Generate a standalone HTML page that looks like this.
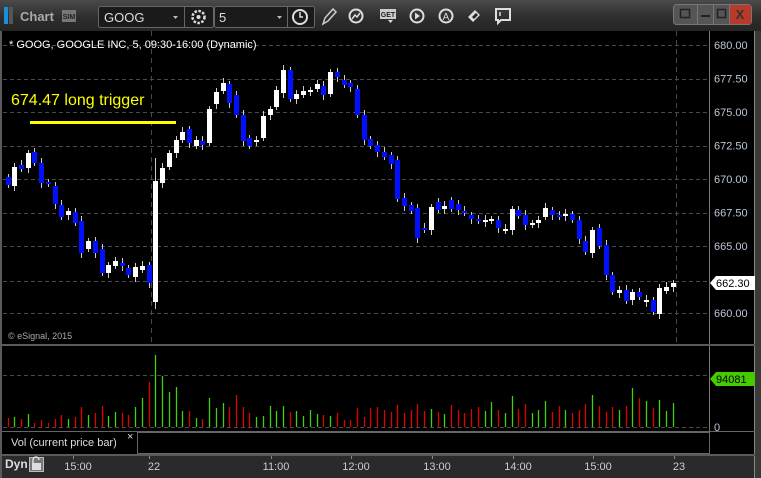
<!DOCTYPE html>
<html><head><meta charset="utf-8"><style>
body{margin:0;width:761px;height:478px;overflow:hidden;background:#2a2a2a;font-family:"Liberation Sans",sans-serif;}
#tb{position:absolute;left:0;top:0;width:761px;height:31px;background:linear-gradient(#4a4a4a,#2c2c2c 60%,#262626);}
</style></head><body>
<div id="tb"></div>
<svg id="s" width="761" height="478" style="position:absolute;left:0;top:0" font-family="Liberation Sans, sans-serif"></svg>
<script>
var C=[[177,185,0],[167,186,1],[165,169,0],[153,168,1],[152,163,0],[163,183,0],[182,184,0],[186,204,0],[205,217,0],[211,215,1],[212,223,0],[221,253,0],[241,249,1],[241,253,0],[249,273,0],[265,273,1],[261,266,1],[263,266,0],[268,275,0],[267,277,1],[266,270,1],[265,283,0],[181,302,1],[168,183,1],[153,167,1],[140,153,1],[132,140,1],[129,143,0],[140,146,1],[141,145,0],[109,143,1],[92,104,1],[83,91,1],[84,103,0],[95,115,0],[115,141,0],[138,146,0],[140,141,1],[116,138,1],[109,115,1],[90,107,1],[70,93,1],[70,99,0],[94,99,1],[91,95,1],[90,91,1],[84,89,1],[86,95,0],[72,94,1],[72,77,0],[80,85,0],[83,87,0],[89,115,0],[115,140,0],[139,146,0],[145,152,0],[152,157,0],[155,164,0],[160,199,0],[198,206,0],[205,211,0],[208,238,0],[228,230,0],[207,230,1],[202,210,0],[206,209,1],[200,209,0],[204,210,0],[211,213,0],[215,219,0],[219,221,0],[220,222,1],[219,221,1],[220,228,0],[229,231,1],[209,230,1],[210,216,0],[215,225,0],[223,225,1],[220,223,1],[208,217,1],[210,215,0],[215,217,0],[214,216,1],[214,220,0],[220,239,0],[241,252,0],[230,253,1],[228,246,0],[245,275,0],[275,292,0],[290,293,1],[290,301,0],[292,300,1],[292,297,0],[300,302,1],[300,312,0],[288,314,1],[287,291,1],[283,287,1]];
var V=[418,417,419,414,423,420,423,419,415,419,417,407,415,413,406,416,412,413,415,407,398,382,355,376,392,387,411,411,418,419,398,408,403,407,395,407,413,417,416,406,411,406,412,411,416,410,414,415,416,413,420,420,408,417,408,407,410,412,405,413,410,404,411,409,412,414,405,410,413,409,407,411,402,410,413,396,409,404,413,410,401,412,406,410,413,410,404,395,406,412,407,410,406,388,398,401,408,400,411,403,378];
var h='';
function r(x,y,w,hh,c){h+='<rect x="'+x+'" y="'+y+'" width="'+w+'" height="'+hh+'" fill="'+c+'"/>';}
function l(x1,y1,x2,y2,c,w,d){h+='<line x1="'+x1+'" y1="'+y1+'" x2="'+x2+'" y2="'+y2+'" stroke="'+c+'" stroke-width="'+(w||1)+'"'+(d?' stroke-dasharray="'+d+'"':'')+'/>';}
function t(x,y,s,c,fs,a,fw){h+='<text x="'+x+'" y="'+y+'" fill="'+c+'" font-size="'+fs+'"'+(a?' text-anchor="'+a+'"':'')+(fw?' font-weight="bold"':'')+'>'+s+'</text>';}
r(2,31,753,424,'#000');
r(0,31,2,447,'#5a5a5a');r(755,31,6,447,'#3a3a3a');r(754,31,1,447,'#888');
var prices=['680.00','677.50','675.00','672.50','670.00','667.50','665.00','662.50','660.00'];
for(var i=0;i<9;i++){var y=45+i*33.5;if(i==7)y=280.5;l(3,Math.round(y)+.5,709,Math.round(y)+.5,'#4a4a4a',1,'4,3');}
for(var i=0;i<9;i++){var y=45+i*33.5;if(i==7)continue;t(714,y+4,prices[i],'#b8c8d8',11);}
l(151.5,31,151.5,344,'#4a4a4a',1,'5,4');l(676.5,31,676.5,345,'#4a4a4a',1,'5,4');
l(709.5,31,709.5,455,'#777',1);
for(var i=0;i<C.length;i++){var x=Math.round(7.5+i*6.72),c=C[i];var col=c[2]?'#fff':'#0010ff';
var wt=c[0]-3-(i%3),wb=c[1]+3+(i%2)*2;if(i==22){wt=158;wb=309;}
l(x+.5,wt,x+.5,wb,'#ccc',1);r(x-2,c[0],5,Math.max(2,c[1]-c[0]),col);
var vc=c[2]?'#40d010':'#e00000';l(x+.5,V[i],x+.5,427,vc,1.3);}
t(11,105,'674.47 long trigger','#ffff00',16);r(30,121,146,3,'#ffff00');
t(9,48,'* GOOG, GOOGLE INC, 5, 09:30-16:00 (Dynamic)','#fff',11);
t(8,339,'© eSignal, 2015','#aaa',9);
r(2,344,753,2,'#5a5a5a');
l(3,375.5,709,375.5,'#4a4a4a',1,'4,3');l(3,427.5,709,427.5,'#4a4a4a',1,'4,3');
t(714,431,'0','#b8c8d8',11);
r(2,431,753,1,'#666');
r(137,432,572,22,'#000');h+='<rect x="137.5" y="432.5" width="572" height="21" fill="none" stroke="#666"/>';
t(11,446,'Vol (current price bar)','#ddd',11);t(127,440,'×','#ddd',11);
r(2,454,753,2,'#5a5a5a');
h+='<path d="M710 283 L716 276 H755 V290 H716Z" fill="#fff"/>';t(716,287,'662.30','#000',11);
h+='<path d="M710 379 L716 372 H755 V386 H716Z" fill="#44cc00"/>';t(716,383,'94081','#000',11);
var T=[[78,'15:00'],[154,'22'],[276,'11:00'],[356,'12:00'],[437,'13:00'],[518,'14:00'],[598,'15:00'],[679,'23']];
T.forEach(function(a){l(a[0]-4.5,456,a[0]-4.5,459,'#888');t(a[0],470,a[1],'#ccc',11,'middle');});
t(5,468,'Dyn','#ddd',12,null,1);
r(29,457,15,15,'#777');h+='<rect x="29.5" y="457.5" width="14" height="14" fill="none" stroke="#bbb"/>';
h+='<path d="M33 463 V460 a3 3 0 0 1 6 0" fill="none" stroke="#ddd" stroke-width="1.5"/>';r(32,463,9,7,'#ddd');
r(4,7,4,17,'#1a8fe0');r(9,7,4,17,'#555');
t(20,21,'Chart','#aaa',13,null,1);
r(62,10,14,12,'#777');t(69,19,'SIM','#222',7,'middle',1);
h+='<rect x="98.5" y="6.5" width="115" height="21" rx="2" fill="#1a1a1a" stroke="#666"/>';
l(184.5,7,184.5,27,'#666');t(104,22,'GOOG','#ddd',13);h+='<path d="M173 16h5l-2.5 3z" fill="#bbb"/>';
h+='<circle cx="198.5" cy="17" r="6" fill="none" stroke="#ddd" stroke-width="2.5" stroke-dasharray="2.5,1.5"/><circle cx="198.5" cy="17" r="2" fill="#ddd"/>';
h+='<rect x="214.5" y="6.5" width="100" height="21" rx="2" fill="#1a1a1a" stroke="#666"/>';
l(287.5,7,287.5,27,'#666');t(219,22,'5','#ddd',13);h+='<path d="M277 16h5l-2.5 3z" fill="#bbb"/>';
h+='<circle cx="300" cy="17" r="7" fill="none" stroke="#ddd" stroke-width="2"/><path d="M300 12v5h3" stroke="#ddd" fill="none" stroke-width="1.5"/>';
h+='<path d="M323 24l2-6 8-9 3 3-8 9z" fill="none" stroke="#ccc" stroke-width="1.5"/>';
h+='<circle cx="356" cy="16" r="6.5" fill="none" stroke="#ddd" stroke-width="2"/><path d="M352 19l3-4 2 2 3-4" stroke="#ddd" fill="none" stroke-width="1.5"/>';
r(380,9,16,10,'#ccc');t(388,17,'GET','#222',7,'middle',1);h+='<path d="M388 20h5l-2.5 3z" fill="#ddd"/>';
h+='<circle cx="417" cy="16" r="6.5" fill="none" stroke="#ddd" stroke-width="2"/><path d="M415 12.5v7l5-3.5z" fill="#ddd"/>';
h+='<circle cx="446" cy="16" r="6.5" fill="none" stroke="#ddd" stroke-width="2"/>';t(446,20,'A','#ddd',10,'middle');
h+='<path d="M468 17l7-7 5 5-7 7z" fill="#ddd"/><path d="M472 17l4-4 2 2-4 4z" fill="#222"/>';
h+='<path d="M496 9h14v11h-9l-3 3v-3h-2z" fill="none" stroke="#ddd" stroke-width="2"/>';l(500,12,500,16,'#ddd',1.5);
h+='<rect x="673.5" y="4.5" width="78" height="20" rx="3" fill="#555" stroke="#777"/>';
r(729,5,22,19,'#b83a2a');t(740,19,'X','#333',13,'middle',1);
l(697.5,5,697.5,24,'#777');l(713.5,5,713.5,24,'#777');l(729.5,5,729.5,24,'#777');
r(701,15,9,2,'#222');h+='<rect x="717.5" y="9.5" width="8" height="8" fill="none" stroke="#222" stroke-width="1.5"/>';
h+='<rect x="680.5" y="9.5" width="9" height="8" fill="none" stroke="#222" stroke-width="1.5"/>';
document.getElementById('s').innerHTML=h;
</script>
</body></html>
